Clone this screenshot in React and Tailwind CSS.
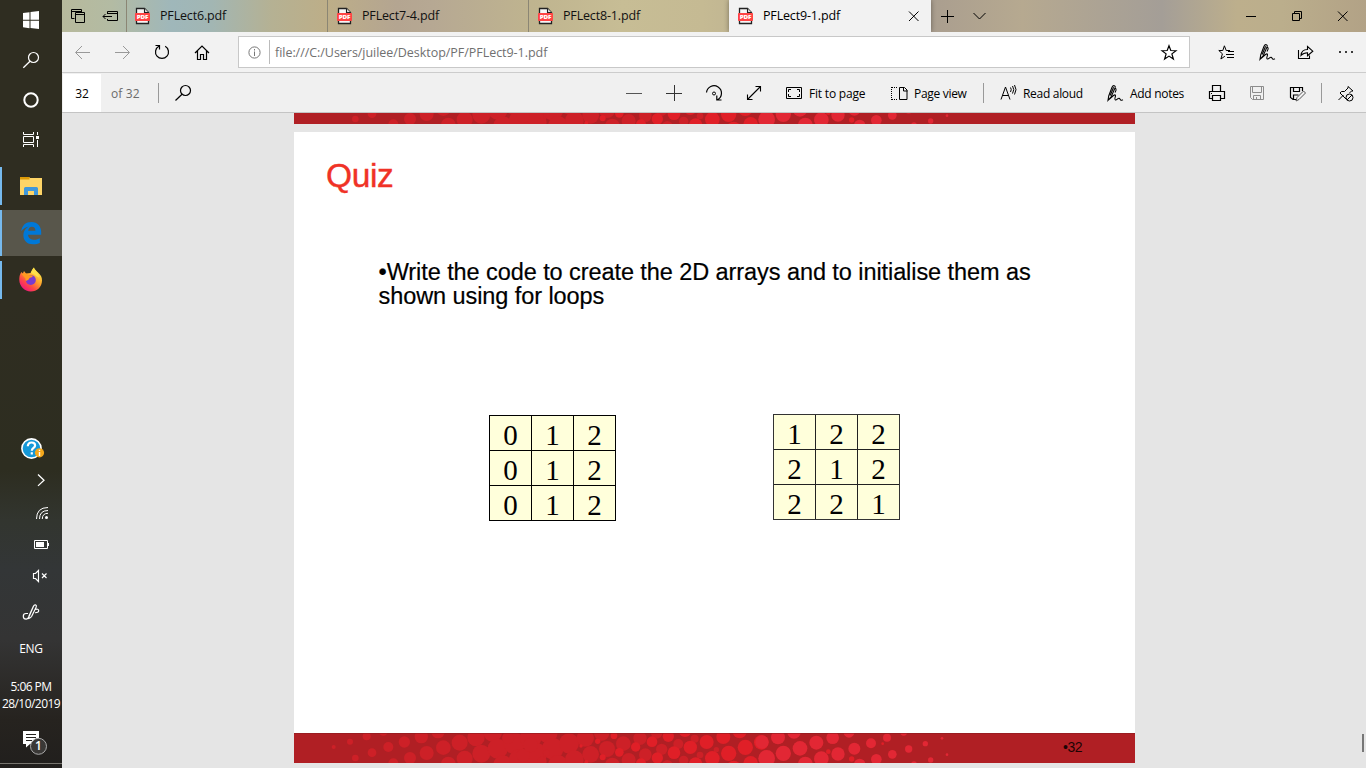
import React from "react";

function Icon({ x, y, w, h = 20, className = "", children }) {
  return (
    <svg
      width={w}
      height={h}
      viewBox={`${x} ${y} ${w} ${h}`}
      fill="none"
      stroke="currentColor"
      strokeWidth="1"
      className={`block shrink-0 ${className}`}
    >
      {children}
    </svg>
  );
}

/* ---------- Footer band of the slides ---------- */

const darkDots = [
  [131, 82, 6], [180, 66, 9], [196, 115, 10], [230, 50, 12], [246, 99, 13], [280, 36, 12], [295, 82, 15],
  [310, 131, 15], [343, 67, 17], [360, 115, 18], [394, 51, 20], [410, 100, 21], [444, 36, 20], [460, 84, 22],
  [475, 133, 22], [509, 69, 24], [524, 117, 24], [558, 54, 26], [574, 102, 27], [608, 38, 28], [623, 87, 30],
  [639, 136, 29], [673, 71, 32], [689, 120, 32], [722, 54, 32], [738, 103, 33], [772, 38, 31], [788, 87, 32],
  [804, 136, 30], [837, 71, 30], [853, 120, 28], [886, 55, 26], [902, 104, 25], [935, 40, 23], [951, 88, 24],
  [967, 136, 22], [1000, 72, 22], [1016, 121, 21], [1050, 56, 20], [1066, 105, 19], [1100, 40, 17], [1115, 89, 17],
  [1132, 137, 16], [1165, 73, 15], [1181, 122, 14], [1214, 57, 12], [1230, 106, 10], [1279, 90, 8], [654, 55, 18],
  [700, 107, 20], [770, 100, 10], [722, 76, 22], [756, 125, 14],
];
const brightDots = [
  [873, 79, 5], [889, 127, 6], [923, 65, 8], [938, 113, 9], [972, 48, 10], [988, 98, 13], [1037, 82, 14],
  [1053, 131, 15], [1086, 66, 16], [1102, 115, 17], [1135, 50, 17], [1152, 99, 19], [1185, 34, 18], [1201, 83, 20],
  [1217, 133, 20], [1250, 67, 21], [1267, 116, 22], [1300, 52, 21], [1316, 101, 23], [1331, 145, 22], [1349, 35, 21],
  [1366, 83, 23], [1382, 131, 22], [1414, 68, 22], [1615, 96, 7], [1685, 118, 8], [1778, 72, 4], [1580, 68, 6],
];
const pinkDots = [
  [1416, 67, 20], [1430, 116, 25], [1464, 53, 21], [1480, 101, 23], [1512, 37, 20], [1530, 86, 22], [1546, 133, 22],
  [1579, 69, 21], [1594, 117, 22], [1628, 54, 19], [1644, 103, 20], [1677, 38, 16], [1693, 87, 18], [1709, 134, 17],
  [1743, 71, 15], [1759, 119, 16], [1791, 54, 12], [1807, 104, 13], [1841, 38, 10], [1856, 88, 11], [1872, 134, 9],
  [1906, 72, 8], [1922, 121, 8], [1956, 56, 4], [1971, 105, 4],
];

const dots = (list, fill) => list.map(([x, y, r], i) => <circle key={i} cx={x} cy={y} r={r} fill={fill} />);

function BandArt() {
  return (
    <svg width="841" height="30" viewBox="12 40 2523 90" className="block shrink-0">
      <rect x="12" y="40" width="2523" height="90" fill="#b01f24" />
      {dots(darkDots, "#cd2027")}
      {dots(brightDots, "#e01f27")}
      {dots(pinkDots, "#e22734")}
      <rect x="12" y="40" width="2523" height="3" fill="#8c1c20" opacity="0.6" />
    </svg>
  );
}

/* ---------- Taskbar ---------- */

function PenWorkspace() {
  return (
    <Icon x={22} y={602} w={18}>
      <path d="M28 613.500h-2a2.700 2.700 0 0 0-2.700 2.700c0 1.600 1.100 2.900 2.800 2.900 1.500 0 2.300-1.200 3.200-3.200l4.200-9.600c.6-1.300 1.600-1.700 2.300-1.300.9.500.7 1.600.2 2.600l-4.300 8.700c-.6 1.100-1.600 1.900-2.800 2.200l.1-2.700 4.200-9M35.500 609.500c1.500-.8 3.200-.2 3.200 1.200s-1.500 2-3.500 1.900" strokeWidth="1.200" />
    </Icon>
  );
}

function Taskbar() {
  return (
    <aside className="flex h-[768px] w-[62px] shrink-0 flex-col items-center bg-[linear-gradient(#2f2d21_0px,#2f2d21_300px,#2d2d20_470px,#32352f_520px,#333637_570px,#343434_640px,#26231f_720px,#211f1d_768px)] text-white">
      <div className="flex h-10 items-center">
        <Icon x={21} y={10} w={20}>
          <path d="M23 12.900l6.500-.9v7.500H23zM30.500 11.900l8.500-1v8.600h-8.500zM23 20.500h6.500V28L23 27.100zM30.500 20.500H39V28.900l-8.500-1z" fill="currentColor" stroke="none" transform="translate(0 .2)" />
        </Icon>
      </div>
      <div className="flex h-10 items-center">
        <Icon x={21} y={50} w={20}>
          <circle cx="33.500" cy="57.500" r="5" strokeWidth="1.200" />
          <path d="M30 61.200L23.300 67.800" strokeWidth="1.300" />
        </Icon>
      </div>
      <div className="flex h-10 items-center">
        <Icon x={21} y={90} w={20}>
          <circle cx="31" cy="100" r="6.700" strokeWidth="2" />
        </Icon>
      </div>
      <div className="flex h-10 items-center">
        <Icon x={21} y={130} w={20}>
          <path d="M23.500 132v2.500h10V132M23.500 147v-2.500h10v2.500M23.500 136.500h10v6h-10zM37.500 132v3M37.500 140v7" />
          <path d="M36 136h3v3h-3z" fill="currentColor" stroke="none" />
        </Icon>
      </div>
      <div className="mt-[7px] flex h-[38px] w-full items-center border-l-2 border-[#76b9ed]">
        <Icon x={18} y={176} w={26} className="ml-4">
          <path d="M20 177h9l1 1h12v17H20z" fill="#fdd467" stroke="none" />
          <path d="M20 177h9.500v2.500H20z" fill="#dc9a08" stroke="none" />
          <path d="M24 195v-6.500q0-1.500 1.500-1.500h11q1.500 0 1.500 1.500v6.500h-4v-4h-6v4z" fill="#3f97db" stroke="none" />
        </Icon>
      </div>
      <div className="mt-[5px] flex h-[46px] w-full items-center border-l-2 border-[#76b9ed] bg-[#58564b]">
        <Icon x={18} y={221} w={26} h={24} className="ml-4">
          <path d="M21.200 231.300C22 225.200 26 222 31.400 222c6.300 0 9.800 4.700 9.800 10v2.700H28.100c.1 3.500 3.200 5.100 6.200 5.100 2.200 0 4.100-.6 5.500-1.500v4.600c-1.800.9-3.900 1.400-6.700 1.400-5.900 0-9.700-3.400-9.700-9 0-4.300 2.400-7.300 6-8.700-3.300.4-6.300 2-8.200 4.700zm7-.5h7.200c0-2.600-1.200-4.100-3.500-4.100-2.100 0-3.400 1.600-3.700 4.100z" fill="#0078d7" stroke="none" />
        </Icon>
      </div>
      <div className="mt-[5px] flex h-[38px] w-full items-center border-l-2 border-[#76b9ed]">
        <Icon x={18} y={267} w={26} h={26} className="ml-4">
          <defs>
            <linearGradient id="fx" x1="0.850" y1="0.100" x2="0.200" y2="0.950">
              <stop offset="0" stopColor="#fff04a" />
              <stop offset="0.400" stopColor="#ffa22c" />
              <stop offset="0.700" stopColor="#ff4a45" />
              <stop offset="1" stopColor="#f0127e" />
            </linearGradient>
          </defs>
          <g stroke="none">
            <path d="M20.500 273.500l1-1.500 1.300 1.500 1.200-2.500 2 2.500 4.500-.5 1.500-3 2-2.500c.5 2 2 3 4 5 3 2.500 4 5 4 8 0 6.500-5 11-11.200 11C24.500 291.500 19.300 286 19.300 280c0-2.500.2-4.500 1.200-6.500z" fill="url(#fx)" />
            <circle cx="30.800" cy="280" r="5" fill="#7a3bd0" />
            <path d="M21.500 274c3-1.500 5.500-.5 6.500 1l5 .5c-.3 1.500-2 2-3.500 2.500-.5 2-2.500 2-3.500 3-1-1.500-.5-2.500-.5-2.500z" fill="#ff9a20" />
            <path d="M33.500 267.500c.5 2 5.500 4.500 5.500 10l-3-1.500c-1.500-2-4.500-2-5-3.500z" fill="#ffe14a" />
          </g>
        </Icon>
      </div>
      <div className="mt-[133px] flex h-[34px] items-center pl-0.5">
        <Icon x={19} y={437} w={26} h={24}>
          <circle cx="31.500" cy="448.500" r="9.600" fill="#1598d8" stroke="#fff" strokeWidth="1.600" />
          <path d="M27.800 446.200q.2-3.700 3.800-3.700 3.500 0 3.500 2.900c0 2.500-3.300 2.500-3.300 5.400M31.800 452.300v2.200" stroke="#fff" strokeWidth="2.200" />
          <circle cx="39.500" cy="452.800" r="4.600" fill="#f5a81c" stroke="none" />
          <path d="M39.500 449.700v1.400M39.500 452v4" stroke="#fff" strokeWidth="1.400" />
        </Icon>
      </div>
      <div className="flex h-7 w-full items-center pl-8">
        <Icon x={32} y={470} w={18}>
          <path d="M38 474.500l6 5.700-6 5.700" strokeWidth="1.300" />
        </Icon>
      </div>
      <div className="flex h-[38px] w-full items-center pl-8">
        <Icon x={32} y={503} w={18}>
          <path d="M36.500 519q0-11.500 11.500-11.500M39.500 519q0-8.500 8.500-8.500M42.300 519q0-5.700 5.700-5.700" />
          <circle cx="46.500" cy="517.500" r="1.500" fill="currentColor" stroke="none" />
        </Icon>
      </div>
      <div className="flex h-[26px] w-full items-center pl-8">
        <Icon x={32} y={535} w={18}>
          <path d="M34.500 540.500h13v8h-13z" />
          <path d="M36 542h8v5h-8zM48 543h1v3h-1z" fill="currentColor" stroke="none" />
        </Icon>
      </div>
      <div className="flex h-9 w-full items-center pl-8">
        <Icon x={32} y={566} w={18}>
          <path d="M33.500 573.500h2l3-3v11l-3-3h-2zM42 573.500l4.500 4.500M46.500 573.500L42 578" strokeWidth="1.150" />
        </Icon>
      </div>
      <div className="flex h-9 items-center">
        <PenWorkspace />
      </div>
      <div className="flex h-9 items-center pt-0.5 font-['Open_Sans',sans-serif] text-[12px] leading-4 tracking-[-0.35px]">ENG</div>
      <div className="flex h-[59px] flex-col items-center justify-center whitespace-nowrap pb-0.5 font-['Open_Sans',sans-serif] text-[12px] leading-[17px] tracking-[-0.55px]">
        <span>5:06 PM</span>
        <span>28/10/2019</span>
      </div>
      <div className="mt-[2px] flex h-[30px] w-full items-center pl-5">
        <div className="relative">
          <Icon x={20} y={729} w={28} h={26}>
            <path d="M23 731h16v13h-9l-4 3.500V744h-3z" fill="currentColor" stroke="none" />
            <path d="M26 734.500h10M26 737.500h10M26 740.500h6" stroke="#26231f" />
            <circle cx="38.500" cy="746.300" r="8" fill="#3a3836" stroke="#aaa" />
          </Icon>
          <span className="absolute left-[15px] top-[11px] font-['Open_Sans',sans-serif] text-[12px] font-semibold leading-3">1</span>
        </div>
      </div>
      <div className="mt-auto mb-1 h-px w-full bg-[#77756f]" />
    </aside>
  );
}

/* ---------- Tabs ---------- */

function PdfBadge() {
  return (
    <svg width="17" height="18" viewBox="0 0 17 18" className="block shrink-0">
      <path d="M2.500 1.500h8l4 4v11h-12z" fill="#f6f6f6" stroke="#222" strokeWidth="1.300" />
      <path d="M10.500 1.500v4h4" fill="#ddd" stroke="#222" strokeWidth="1.100" />
      <rect x="1" y="6" width="15" height="8" rx="0.800" fill="#ff4444" />
      <text x="8.500" y="12.200" textAnchor="middle" fontFamily="Open Sans, sans-serif" fontWeight="800" fontSize="5.600" fill="#fff" textLength="11.500" lengthAdjust="spacingAndGlyphs">PDF</text>
    </svg>
  );
}

function Tab({ title, width, first }) {
  return (
    <div className={`flex h-8 shrink-0 items-center border-l border-[#8b8674] ${first ? "pl-[7px]" : "pl-[8px]"} ${width}`}>
      <PdfBadge />
      <span className="ml-[9px] pt-px">{title}</span>
    </div>
  );
}

function TabBar() {
  return (
    <div className="flex h-8 shrink-0 items-center bg-[linear-gradient(90deg,#b7b99c_0px,#b3bba3_50px,#9fb7ba_110px,#a2b6b3_150px,#b5b193_210px,#bdae88_265px,#b4a591_335px,#b6a893_370px,#bfb48f_470px,#c7bd95_560px,#c5ba93_640px,#aa9e8f_870px,#b6a990_960px,#a49e97_1100px,#bdaf8c_1175px,#bbae8c_1220px,#b2a286_1304px)] font-['Open_Sans',sans-serif] text-[12.500px] tracking-[-0.16px] text-[#111]">
      <div className="flex w-[64px] shrink-0 items-center text-black">
        <Icon x={69} y={6} w={20} className="ml-[7px]">
          <path d="M74.500 18.500h-3v-9h10v3M71 11.500h11" />
          <path d="M75.500 12.500h9v10h-9zM75 14.500h10" />
        </Icon>
        <Icon x={100} y={6} w={20} className="ml-[11px]">
          <path d="M107.500 13v-1.500h10v9h-10V19M107 13.500h11M103 16.500h9M105.500 14l-2.500 2.500 2.500 2.500" />
        </Icon>
      </div>
      <Tab title="PFLect6.pdf" width="w-[201px]" first />
      <Tab title="PFLect7-4.pdf" width="w-[201px]" />
      <Tab title="PFLect8-1.pdf" width="w-[201px]" />
      <div className="flex h-8 w-[202px] shrink-0 items-center bg-[#f2f2f2] pl-2 text-black shadow-[0_0_5px_#0006]">
        <PdfBadge />
        <span className="ml-[9px] pt-px">PFLect9-1.pdf</span>
        <Icon x={904} y={6} w={20} className="ml-auto mr-[7px]">
          <path d="M909 11.500l9.500 9.500M918.500 11.500L909 21" />
        </Icon>
      </div>
      <Icon x={937} y={6} w={20} className="ml-[6px] text-black">
        <path d="M941 16.500h13M947.500 10v13" />
      </Icon>
      <Icon x={969} y={6} w={20} className="ml-3 text-black">
        <path d="M973.500 13l6 6 6-6" />
      </Icon>
      <div className="ml-auto flex items-center text-black">
        <Icon x={1241} y={6} w={20}>
          <path d="M1246 16.500h10" />
        </Icon>
        <Icon x={1287} y={6} w={20} className="ml-[26px]">
          <path d="M1292.500 13.500h7v7h-7zM1294.500 13v-1.500h7v7h-1.500" />
        </Icon>
        <Icon x={1333} y={6} w={20} className="ml-[26px] mr-[13px]">
          <path d="M1338 11.500l9.500 9.500M1347.500 11.500l-9.500 9.500" />
        </Icon>
      </div>
    </div>
  );
}

/* ---------- Address bar ---------- */

function PenStroke() {
  return (
    <path d="M3 17.300l.7-4.300L7 4.300Q7.900 2.300 9.300 2.700t.7 2.300L6.300 13.500zM5.200 12.500L8.600 4.300M10 5q1.500.8 1 2.200L10 9.500M3 17.300l5.500-4.800q1.700-1.300 2 0c.3 1.300-1.700 3.800-.2 4.500 1.400.6 2.300-1.800 3.700-1.700 1.300.1.900 1.900 2.200 2 .8 0 1.200-.3 1.800-.6" strokeWidth="1.050" />
  );
}

const star = "M1169 45.800l1.800 4.700 5.200.2-4.100 3.200 1.500 5.100-4.400-2.900-4.400 2.900 1.500-5.100-4.100-3.200 5.200-.2z";

function AddressBar() {
  return (
    <div className="flex h-[41px] shrink-0 items-center bg-[#f2f2f2] pb-px text-black shadow-[inset_0_-1px_0_#cccccc]">
      <Icon x={73} y={42} w={20} className="ml-[11px] text-[#999]">
        <path d="M90 52.500H76M82 46l-6.500 6.500L82 59" />
      </Icon>
      <Icon x={113} y={42} w={20} className="ml-5 text-[#999]">
        <path d="M115 52.500h14M123 46l6.500 6.500L123 59" />
      </Icon>
      <Icon x={152} y={42} w={20} className="ml-[19px]">
        <path d="M158.800 46.300A6.500 6.500 0 1 0 165.200 46.300M155.500 45.500h4v4" strokeWidth="1.200" />
      </Icon>
      <Icon x={192} y={42} w={20} className="ml-5">
        <path d="M195 53l7-7 7 7M197.500 51v8.500h3v-5h3v5h3V51" strokeWidth="1.200" />
      </Icon>
      <div className="ml-[26px] flex h-8 w-[952px] shrink-0 items-center border border-[#c8c8c8] bg-white">
        <Icon x={244} y={42} w={20} className="ml-[5px] text-[#777]">
          <circle cx="254.500" cy="52.500" r="5.600" />
          <path d="M254.500 49v1.500M254.500 51.500v4.500" />
        </Icon>
        <div className="ml-[5px] h-6 w-px bg-[#bbb]" />
        <span className="ml-[5px] whitespace-nowrap pt-0.5 font-['Open_Sans',sans-serif] text-[12.500px] tracking-[-0.04px] text-[#707070]">file:///C:/Users/juilee/Desktop/PF/PFLect9-1.pdf</span>
        <Icon x={1159} y={42} w={20} className="ml-auto mr-[10px]">
          <path d={star} strokeWidth="1.200" />
        </Icon>
      </div>
      <Icon x={1217} y={42} w={20} className="ml-[27px]">
        <path d="M1230 50.500h-3.800l-1.800-4.700-1.600 4.700h-4l3.600 3.300-1.500 5.200 4-2.800M1226 54.500h8M1227 57.500h7M1228 51.500h6" />
      </Icon>
      <Icon x={0} y={0} w={20} className="ml-5">
        <PenStroke />
      </Icon>
      <Icon x={1296} y={42} w={20} className="ml-[19px]">
        <path d="M1298.500 50v8.500h11v-3M1301 55.500c.3-4.500 3-6 6.500-6v-3l5.300 4.700-5.300 4.500v-2.900c-3 0-4.700.7-6.500 2.700z" strokeWidth="1.100" />
      </Icon>
      <Icon x={1336} y={42} w={20} className="ml-5">
        <path d="M1339 52h2M1345 52h2M1351 52h2" strokeWidth="1.500" />
      </Icon>
    </div>
  );
}

/* ---------- PDF toolbar ---------- */

function Toolbar() {
  return (
    <div className="flex h-10 shrink-0 items-center whitespace-nowrap bg-[#f0f0f0] font-['Open_Sans',sans-serif] text-[12px] tracking-[-0.2px] text-black shadow-[inset_0_-1px_0_#c4c4c4]">
      <div className="ml-px mb-px mt-px flex h-[38px] w-[38px] items-center justify-center bg-white pt-0.5">32</div>
      <span className="ml-[10px] w-[36px] pt-0.5 tracking-[0.1px] text-[#6b6b6b]">of 32</span>
      <div className="ml-[11px] h-5 w-px bg-[#999]" />
      <Icon x={173} y={83} w={20} className="ml-[14px]">
        <circle cx="185.500" cy="90.500" r="5" strokeWidth="1.200" />
        <path d="M182 94.200l-6.500 6.300" strokeWidth="1.200" />
      </Icon>
      <Icon x={624} y={83} w={20} className="ml-[431px] text-[#555]">
        <path d="M626 93.500h16" />
      </Icon>
      <Icon x={664} y={83} w={20} className="ml-5 text-[#333]">
        <path d="M666 93.500h16M674.500 85v16" />
      </Icon>
      <Icon x={704} y={83} w={20} className="ml-5">
        <path d="M706.500 92.500a7.500 7.500 0 1 1 11 7.300M721.500 100h-4.700v-4.500" strokeWidth="1.200" />
        <circle cx="714" cy="93.500" r="1.500" />
      </Icon>
      <Icon x={744} y={83} w={20} className="ml-5">
        <path d="M747.500 99.500l13-13M755.500 86.500h5v5M747.500 94.500v5h5" strokeWidth="1.100" />
      </Icon>
      <Icon x={784} y={83} w={20} className="ml-5">
        <path d="M786.500 87.500h15v11h-15zM788.500 92v-2.500h2.500M797 89.500h2.500V92M788.500 94v2.500h2.500M797 96.500h2.500V94" />
      </Icon>
      <span className="ml-[5px] w-[59px] pt-0.5">Fit to page</span>
      <Icon x={889} y={83} w={20} className="ml-[21px]">
        <path d="M899.500 87.500h5l2.500 2.500v9.500h-7.500zM903.500 87v4h4" />
        <path d="M891.500 87v13M892 87.500h6M892 99.500h6" strokeDasharray="1 1" />
      </Icon>
      <span className="ml-[5px] w-[55px] pt-0.5 tracking-[-0.3px]">Page view</span>
      <div className="ml-[14px] h-5 w-px bg-[#999]" />
      <Icon x={999} y={83} w={20} className="ml-[15px]">
        <path d="M1001 99.500l4.500-12.500 4.500 12.500M1002.500 95.500h6M1010.500 87.500q1.500 2 0 4.500M1012.500 86q2.500 3.500 0 7.500M1014.500 85q3 4.500 0 9.500" />
      </Icon>
      <span className="ml-1 w-[62px] pt-0.5 tracking-[-0.3px]">Read aloud</span>
      <Icon x={0} y={0} w={20} className="ml-5">
        <PenStroke />
      </Icon>
      <span className="ml-[5px] w-[56px] pt-0.5 tracking-[-0.3px]">Add notes</span>
      <Icon x={1207} y={83} w={20} className="ml-[21px]">
        <path d="M1212.500 91V85.500h8V91M1212.500 98.500h-3v-7h15v7h-4M1212.500 95.500h8v5h-8zM1211 93.500h1" strokeWidth="1.200" />
      </Icon>
      <Icon x={1247} y={83} w={20} className="ml-5 text-[#8c8c8c]">
        <path d="M1250.500 86.500h13v13h-11l-2-2zM1252.500 86.500v6h9v-6M1253.500 99.500v-4h7v4M1256.500 99v-2" />
      </Icon>
      <Icon x={1287} y={83} w={20} className="ml-5">
        <path d="M1296 99.500h-3l-2.500-2v-10h12V91M1293.500 87.500v4h6v-4M1293.500 99v-4h5" strokeWidth="1.200" />
        <path d="M1296 101l1-3.500 6.500-6.500 2 2-6.500 6.500z" stroke="#555" />
      </Icon>
      <div className="ml-[14px] h-5 w-px bg-[#999]" />
      <Icon x={1336} y={83} w={20} className="ml-[14px]">
        <path d="M1338.500 100l5-5M1346 99l-6-6 1.500-1.500h3l3.500-3.500v-1.500l5 4.500h-1.500l-2 2" />
        <circle cx="1349.500" cy="97.500" r="3.500" />
        <path d="M1347 100l5-5" />
      </Icon>
    </div>
  );
}

/* ---------- Slides ---------- */

function ArrayGrid({ values, className, edge }) {
  return (
    <div className={`grid h-[106px] w-[127px] grid-cols-3 grid-rows-3 gap-px border ${edge} ${className}`}>
      {values.map((v, i) => (
        <div key={i} className="flex items-center justify-center bg-[#ffffdb] pt-[5px] font-['Liberation_Serif',serif] text-[29px] leading-[29px] text-black">
          {v}
        </div>
      ))}
    </div>
  );
}

function Document() {
  return (
    <main className="flex h-[655px] flex-col overflow-hidden bg-[#e5e5e5] pl-[232px]">
      <div className="flex h-[11px] w-[841px] shrink-0 items-end overflow-hidden">
        <BandArt />
      </div>
      <section className="mt-[8px] flex h-[631px] w-[841px] shrink-0 flex-col bg-white font-['Liberation_Sans',sans-serif] text-black">
        <h1 className="ml-8 mt-[26px] text-[33.500px] leading-9 tracking-[-0.4px] text-[#f03226] [-webkit-text-stroke:0.4px_#f03226]">Quiz</h1>
        <p className="ml-[84.500px] mt-[67px] h-[47px] whitespace-nowrap text-[23.500px] leading-[23.500px] tracking-[-0.075px] [-webkit-text-stroke:0.2px_#000]">
          •Write the code to create the 2D arrays and to initialise them as
          <br />
          shown using for loops
        </p>
        <div className="mt-[106px] flex items-start pl-[195px]">
          <ArrayGrid values={[0, 1, 2, 0, 1, 2, 0, 1, 2]} edge="border-black bg-black" className="mt-px" />
          <ArrayGrid values={[1, 2, 2, 2, 1, 2, 2, 2, 1]} edge="border-[#333] bg-[#222]" className="ml-[157px]" />
        </div>
        <div className="relative mt-auto h-[30px]">
          <BandArt />
          <span className="absolute left-[769px] top-[6px] text-[14px] leading-4 tracking-[-0.5px] text-[#1c0405]">•32</span>
        </div>
      </section>
      <div className="relative">
        <div className="absolute -top-[29px] left-[1068px] h-[18px] w-[2px] bg-[#777]" />
      </div>
    </main>
  );
}

export default function App() {
  return (
    <div className="flex h-[768px] w-[1366px] overflow-hidden">
      <Taskbar />
      <div className="flex w-[1304px] flex-col">
        <TabBar />
        <AddressBar />
        <Toolbar />
        <Document />
      </div>
    </div>
  );
}
